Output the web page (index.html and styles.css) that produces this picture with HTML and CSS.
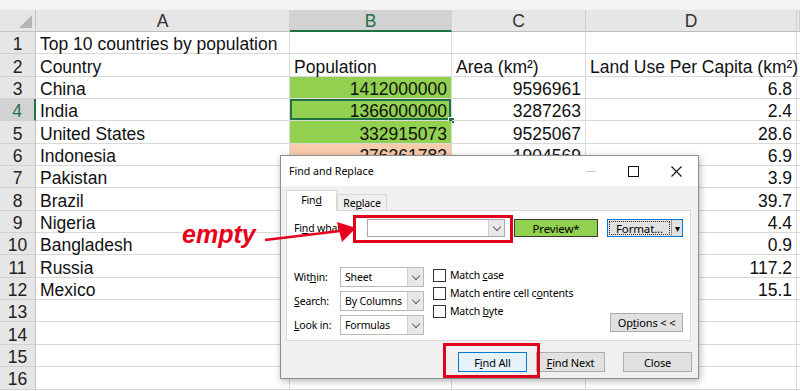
FILE: index.html
```html
<!doctype html>
<html>
<head>
    <title>Find and Replace - empty search</title>
    <link rel="stylesheet" href="styles.css">
</head>
<body>
<div class="app">
    <div class="topstrip"></div>

    <!-- worksheet -->
    <div class="sheet">
        <div class="corner"></div>
        <div class="ch">A</div>
        <div class="ch sel">B</div>
        <div class="ch">C</div>
        <div class="ch">D</div>
        <div class="ch"></div>

        <div class="rh">1</div>
        <div class="c">Top 10 countries by population</div>
        <div class="c"></div><div class="c"></div><div class="c"></div><div class="c"></div>

        <div class="rh">2</div>
        <div class="c">Country</div>
        <div class="c">Population</div>
        <div class="c">Area (km²)</div>
        <div class="c">Land Use Per Capita (km²)</div>
        <div class="c"></div>

        <div class="rh">3</div>
        <div class="c">China</div>
        <div class="c num green">1412000000</div>
        <div class="c num">9596961</div>
        <div class="c num">6.8</div>
        <div class="c"></div>

        <div class="rh sel">4</div>
        <div class="c">India</div>
        <div class="c num green active">1366000000</div>
        <div class="c num">3287263</div>
        <div class="c num">2.4</div>
        <div class="c"></div>

        <div class="rh">5</div>
        <div class="c">United States</div>
        <div class="c num green">332915073</div>
        <div class="c num">9525067</div>
        <div class="c num">28.6</div>
        <div class="c"></div>

        <div class="rh">6</div>
        <div class="c">Indonesia</div>
        <div class="c num peach">276361783</div>
        <div class="c num">1904569</div>
        <div class="c num">6.9</div>
        <div class="c"></div>

        <div class="rh">7</div>
        <div class="c">Pakistan</div>
        <div class="c num">231402117</div>
        <div class="c num">881913</div>
        <div class="c num">3.9</div>
        <div class="c"></div>

        <div class="rh">8</div>
        <div class="c">Brazil</div>
        <div class="c num">214326223</div>
        <div class="c num">8515767</div>
        <div class="c num">39.7</div>
        <div class="c"></div>

        <div class="rh">9</div>
        <div class="c">Nigeria</div>
        <div class="c num">213401323</div>
        <div class="c num">923768</div>
        <div class="c num">4.4</div>
        <div class="c"></div>

        <div class="rh">10</div>
        <div class="c">Bangladesh</div>
        <div class="c num">169356251</div>
        <div class="c num">148460</div>
        <div class="c num">0.9</div>
        <div class="c"></div>

        <div class="rh">11</div>
        <div class="c">Russia</div>
        <div class="c num">145102755</div>
        <div class="c num">17098246</div>
        <div class="c num">117.2</div>
        <div class="c"></div>

        <div class="rh">12</div>
        <div class="c">Mexico</div>
        <div class="c num">126705138</div>
        <div class="c num">1964375</div>
        <div class="c num">15.1</div>
        <div class="c"></div>

        <div class="rh">13</div>
        <div class="c"></div><div class="c"></div><div class="c"></div><div class="c"></div><div class="c"></div>
        <div class="rh">14</div>
        <div class="c"></div><div class="c"></div><div class="c"></div><div class="c"></div><div class="c"></div>
        <div class="rh">15</div>
        <div class="c"></div><div class="c"></div><div class="c"></div><div class="c"></div><div class="c"></div>
        <div class="rh">16</div>
        <div class="c"></div><div class="c"></div><div class="c"></div><div class="c"></div><div class="c"></div>
    </div>

    <!-- Find and Replace dialog -->
    <div class="dialog">
        <div class="titlebar">
            <span class="title">Find and Replace</span>
            <div class="winctl">
                <span class="wbtn">
                    <svg width="10" height="10" viewBox="0 0 10 10"><path d="M0 5.5h10" stroke="#c8c8c8" stroke-width="1"/></svg>
                </span>
                <span class="wbtn">
                    <svg width="11" height="11" viewBox="0 0 11 11"><rect x="0.5" y="0.5" width="10" height="10" fill="none" stroke="#111" stroke-width="1"/></svg>
                </span>
                <span class="wbtn">
                    <svg width="11" height="11" viewBox="0 0 11 11"><path d="M0.5 0.5l10 10M10.5 0.5l-10 10" stroke="#111" stroke-width="1.1"/></svg>
                </span>
            </div>
        </div>

        <div class="dbody">
            <div class="tabs">
                <span class="tab on"><span>Fin<u>d</u></span></span>
                <span class="tab"><span>Re<u>p</u>lace</span></span>
            </div>
            <div class="panel">
                <div class="findrow">
                    <span class="lbl fw"><span>Fi<u>n</u>d what:</span></span>
                    <span class="combo wide"><span class="val"></span><span class="drop"><i class="chev"></i></span></span>
                    <span class="preview">Preview*</span>
                    <span class="fmt"><span class="fmt-main"><span class="focus">Format...</span></span><span class="fmt-arrow">▾</span></span>
                </div>
                <div class="opts">
                    <div class="lookup">
                        <span class="lbl"><span>Wit<u>h</u>in:</span></span>
                        <span class="combo"><span class="val">Sheet</span><span class="drop"><i class="chev"></i></span></span>
                        <span class="lbl"><span><u>S</u>earch:</span></span>
                        <span class="combo"><span class="val">By Columns</span><span class="drop"><i class="chev"></i></span></span>
                        <span class="lbl"><span><u>L</u>ook in:</span></span>
                        <span class="combo"><span class="val">Formulas</span><span class="drop"><i class="chev"></i></span></span>
                    </div>
                    <div class="checks">
                        <label class="chk"><span class="box"></span><span>Match <u>c</u>ase</span></label>
                        <label class="chk"><span class="box"></span><span>Match entire cell c<u>o</u>ntents</span></label>
                        <label class="chk"><span class="box"></span><span>Match <u>b</u>yte</span></label>
                    </div>
                    <span class="btn options"><span>Op<u>t</u>ions &lt; &lt;</span></span>
                </div>
            </div>
            <div class="actions">
                <span class="btn primary"><span>F<u>i</u>nd All</span></span>
                <span class="btn next"><span><u>F</u>ind Next</span></span>
                <span class="btn"><span>Close</span></span>
            </div>
        </div>
    </div>

    <!-- annotations drawn over the screenshot -->
    <div class="mark mark-find"></div>
    <div class="mark mark-all"></div>
    <div class="note">empty</div>
    <svg class="arrow" width="100" height="34" viewBox="0 0 100 34">
        <path d="M3 24 L78 15" stroke="#e8001c" stroke-width="2.6" fill="none"/>
        <path d="M75 6 L94 12 L80 26 Z" fill="#e8001c"/>
    </svg>
</div>
</body>
</html>
```

FILE: styles.css
```css
body {
    margin: 0;
    padding: 0;
    background-color: #ffffff;
    font-family: "Liberation Sans", Arial, sans-serif;
}
.app {
    position: relative;
    width: 800px;
    height: 391px;
    overflow: hidden;
}
.topstrip {
    height: 10px;
    background-color: #f3f3f3;
}

/* worksheet grid */
.sheet {
    display: grid;
    grid-template-columns: 36px 254px 162px 134px 211px 3px;
    grid-template-rows: 22px;
    grid-auto-rows: 22.35px;
    font-size: 17.5px;
    color: #111;
}
.corner {
    position: relative;
    background-color: #e6e6e6;
    border-right: 1px solid #c4c4c4;
    border-bottom: 1px solid #c4c4c4;
}
.corner::after {
    content: "";
    position: absolute;
    right: 3px;
    bottom: 3px;
    width: 13px;
    height: 13px;
    background-color: #b5b5b5;
    clip-path: polygon(100% 0, 100% 100%, 0 100%);
}
.ch {
    background-color: #e6e6e6;
    border-right: 1px solid #cfcfcf;
    border-bottom: 1px solid #bdbdbd;
    display: flex;
    align-items: center;
    justify-content: center;
    color: #333;
    padding-top: 2px;
}
.ch.sel {
    background-color: #d2d2d2;
    color: #217346;
    border-bottom: 2px solid #217346;
}
.rh {
    background-color: #e6e6e6;
    border-right: 1px solid #c4c4c4;
    border-bottom: 1px solid #d0d0d0;
    display: flex;
    align-items: center;
    justify-content: center;
    color: #222;
    padding-top: 4px;
}
.rh.sel {
    background-color: #d2d2d2;
    color: #217346;
    border-right: 2px solid #217346;
}
.c {
    position: relative;
    border-right: 1px solid #d9d9d9;
    border-bottom: 1px solid #d9d9d9;
    padding: 4px 4px 0;
    display: flex;
    align-items: center;
    white-space: nowrap;
}
.num {
    justify-content: flex-end;
}
.green {
    background-color: #92d050;
}
.peach {
    background-color: #f8cbad;
}
.active {
    box-shadow: inset 0 0 0 2px #217346;
}
.active::after {
    content: "";
    position: absolute;
    right: -4px;
    bottom: -4px;
    width: 5px;
    height: 5px;
    background-color: #217346;
    border: 1px solid #ffffff;
}

/* dialog */
.dialog {
    position: absolute;
    left: 280px;
    top: 155px;
    width: 419px;
    height: 224px;
    box-sizing: border-box;
    background-color: #f0f0f0;
    border: 1px solid #8e8e8e;
    box-shadow: 1px 2px 7px rgba(0, 0, 0, 0.3);
    font-family: "Noto Sans", "Open Sans", sans-serif;
    font-size: 10.5px;
    letter-spacing: -0.15px;
    color: #000;
    white-space: nowrap;
}
.titlebar {
    height: 30px;
    background-color: #ffffff;
    display: flex;
    align-items: center;
    padding-left: 8px;
}
.title {
    font-size: 10.6px;
    letter-spacing: 0;
}
.winctl {
    margin-left: auto;
    display: flex;
    height: 100%;
}
.wbtn {
    width: 43px;
    display: flex;
    align-items: center;
    justify-content: center;
}
.dbody {
    padding: 4px 6px 0 5px;
}
.tabs {
    display: flex;
    align-items: flex-end;
    height: 20px;
}
.tab {
    width: 50px;
    height: 16px;
    box-sizing: border-box;
    border: 1px solid #d9d9d9;
    border-bottom: none;
    display: flex;
    align-items: center;
    justify-content: center;
}
.tab.on {
    width: 51px;
    height: 21px;
    background-color: #ffffff;
    margin-bottom: -1px;
    position: relative;
    z-index: 1;
    padding-bottom: 2px;
}
.panel {
    height: 131px;
    margin-right: 1px;
    box-sizing: border-box;
    background-color: #ffffff;
    border: 1px solid #d9d9d9;
    padding: 7px 7px 7px 7px;
}
.findrow {
    display: flex;
    align-items: center;
    height: 18px;
    margin-top: 1px;
}
.lbl {
    display: flex;
    align-items: center;
}
.fw {
    width: 73px;
}
.combo {
    display: flex;
    height: 20px;
    box-sizing: border-box;
    border: 1px solid #b9b9b9;
    background-color: #ffffff;
}
.combo.wide {
    width: 138px;
    height: 18px;
    border-color: #a8a8a8;
}
.combo .val {
    flex: 1;
    padding-left: 4px;
    display: flex;
    align-items: center;
    overflow: hidden;
}
.drop {
    width: 15px;
    background-color: #e8e8e8;
    border-left: 1px solid #cfcfcf;
    display: flex;
    align-items: center;
    justify-content: center;
}
.chev {
    width: 5px;
    height: 5px;
    border-right: 1px solid #606060;
    border-bottom: 1px solid #606060;
    transform: rotate(45deg);
    margin-top: -3px;
}
.preview {
    margin-left: 9px;
    width: 84px;
    height: 18px;
    box-sizing: border-box;
    background-color: #92d050;
    border: 1px solid #3a3a3a;
    display: flex;
    align-items: center;
    justify-content: center;
    font-size: 11.5px;
}
.fmt {
    margin-left: 9px;
    display: flex;
    width: 76px;
    height: 18px;
    box-sizing: border-box;
    border: 1px solid #0078d7;
    background-color: #e1e1e1;
}
.fmt-main {
    flex: 1;
    display: flex;
    padding: 1px;
}
.focus {
    flex: 1;
    border: 1px dotted #333;
    display: flex;
    align-items: center;
    justify-content: center;
    font-size: 11.5px;
}
.fmt-arrow {
    width: 10px;
    border-left: 1px solid #9a9a9a;
    display: flex;
    align-items: center;
    justify-content: center;
    font-size: 10px;
}
.opts {
    display: flex;
    margin-top: 30px;
}
.lookup {
    display: grid;
    grid-template-columns: 46px 84px;
    grid-auto-rows: 20px;
    row-gap: 4px;
}
.checks {
    margin-left: 9px;
    margin-top: -1px;
    display: flex;
    flex-direction: column;
}
.chk {
    display: flex;
    align-items: center;
    height: 18px;
}
.box {
    width: 13px;
    height: 13px;
    box-sizing: border-box;
    border: 1px solid #333;
    background-color: #ffffff;
    margin-right: 4px;
}
.btn {
    display: flex;
    align-items: center;
    justify-content: center;
    width: 69px;
    height: 20px;
    box-sizing: border-box;
    background-color: #e1e1e1;
    border: 1px solid #adadad;
    font-size: 11px;
}
.options {
    margin-left: auto;
    margin-top: 46px;
    width: 73px;
    height: 19px;
}
.actions {
    display: flex;
    justify-content: flex-end;
    padding-top: 11px;
}
.btn.primary {
    background-color: #e5f1fb;
    border-color: #0078d7;
    margin-right: 9px;
}
.btn.next {
    margin-right: 18px;
}

/* red annotations */
.mark {
    position: absolute;
    box-sizing: border-box;
    border: 3px solid #e3001b;
}
.mark-find {
    left: 353px;
    top: 215px;
    width: 160px;
    height: 28px;
}
.mark-all {
    left: 443px;
    top: 343px;
    width: 97px;
    height: 35px;
}
.note {
    position: absolute;
    left: 182px;
    top: 220px;
    font-family: "Liberation Sans", Arial, sans-serif;
    font-size: 25px;
    font-weight: bold;
    font-style: italic;
    color: #e8001c;
}
.arrow {
    position: absolute;
    left: 262px;
    top: 216px;
}
```
